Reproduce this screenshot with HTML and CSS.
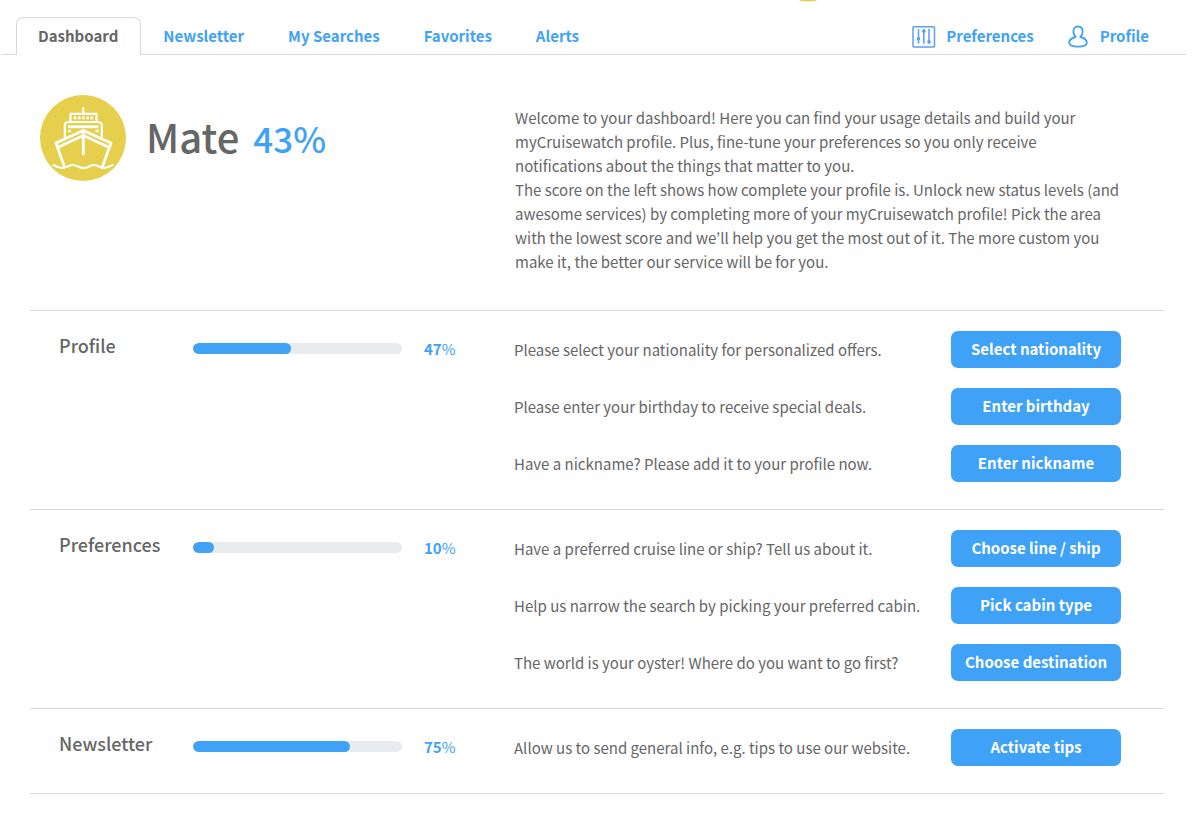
FILE: index.html
```html
<!DOCTYPE html>
<html lang="en">
<head>
<meta charset="utf-8">
<title>Dashboard</title>
<link rel="stylesheet" href="styles.css">
</head>
<body>
<div class="top-strip"><svg class="top-mark" width="24" height="2" viewBox="0 0 24 2" aria-hidden="true"><ellipse cx="13" cy="-1" rx="10" ry="2.6" fill="#e5cf4d"/></svg></div>
<nav class="tabs">
  <a class="tab tab-active" href="#dashboard">Dashboard</a>
  <a class="tab" href="#newsletter">Newsletter</a>
  <a class="tab" href="#searches">My Searches</a>
  <a class="tab" href="#favorites">Favorites</a>
  <a class="tab" href="#alerts">Alerts</a>
  <div class="tools">
    <a class="tool" href="#preferences">
      <svg width="24" height="24" viewBox="0 0 24 24" fill="none" stroke="#5b9df7" stroke-width="1.5" aria-hidden="true"><rect x="1" y="2.700" width="21.500" height="20.300" rx="1"/><path d="M6.500 5v14.700M11.800 5v14.700M17 5v14.700"/><g fill="#5b9df7" stroke="none"><circle cx="6.500" cy="14.700" r="1.800"/><circle cx="11.800" cy="7.200" r="1.800"/><circle cx="17" cy="17.700" r="1.800"/></g></svg>
      <span>Preferences</span>
    </a>
    <a class="tool" href="#profile">
      <svg width="22" height="24" viewBox="0 0 22 24" fill="none" stroke="#3fa2f7" stroke-width="1.8" stroke-linejoin="round" aria-hidden="true"><path d="M10 2.500c-3.100 0-4.600 2.300-4.600 5.200 0 2.500 1 4.300 2.300 5.300C3.700 13.900 1.200 15.900 1.200 18.800c0 2.700 4 3.900 8.800 3.900s8.800-1.200 8.800-3.900c0-2.900-2.500-4.900-6.500-5.800 1.300-1 2.300-2.800 2.300-5.300 0-2.900-1.500-5.200-4.600-5.200z"/></svg>
      <span>Profile</span>
    </a>
  </div>
</nav>
<main class="content">
  <header class="hero">
    <div class="status">
      <svg class="badge" width="86" height="86" viewBox="0 0 86 86" fill="none" stroke="#fff" stroke-width="2.2" stroke-linejoin="round" stroke-linecap="round" aria-hidden="true">
        <circle cx="43" cy="43" r="43" fill="#e5cf4d" stroke="none"/>
        <path d="M43.300 13v5M30.500 26v-7.200h26V26M24.800 42V30.500q0-3.500 3.500-3.500h30q3.500 0 3.500 3.500V42"/>
        <path d="M28 31.800h30.500" stroke-width="2.800" stroke-linecap="butt"/>
        <path d="M33.700 22.800h19.500" stroke-width="2.700" stroke-dasharray="2.700 1.500" stroke-linecap="butt"/>
        <path d="M28 34.700h3v2.500h-3zM55.500 34.700h3v2.500h-3z" fill="#fff" stroke="none"/>
        <path d="M43.300 35.500L16 48l8.300 23.500M43.300 35.500L71 48l-8.500 23.500M17.500 52.500l25.800-12 26 12M43.300 36v23" stroke-width="2.800"/>
        <path d="M13.500 70c3 2 5 3 8.500 3 5 0 7-3 11-3s6 3 10.500 3S50 70 54 70s6 3 10 3c3.500 0 5-1 8.500-3"/>
      </svg>
      <h1 class="rank">Mate</h1>
      <span class="score">43%</span>
    </div>
    <div class="intro">
      <p>Welcome to your dashboard! Here you can find your usage details and build your myCruisewatch profile. Plus, fine-tune your preferences so you only receive notifications about the things that matter to you.</p>
      <p>The score on the left shows how complete your profile is. Unlock new status levels (and awesome services) by completing more of your myCruisewatch profile! Pick the area with the lowest score and we’ll help you get the most out of it. The more custom you make it, the better our service will be for you.</p>
    </div>
  </header>
  <section class="section">
    <h2 class="name">Profile</h2>
    <div class="track"><div class="fill" style="width:47%"></div></div>
    <div class="percent"><b>47</b>%</div>
    <div class="actions">
      <div class="action"><p>Please select your nationality for personalized offers.</p><button class="button">Select nationality</button></div>
      <div class="action"><p>Please enter your birthday to receive special deals.</p><button class="button">Enter birthday</button></div>
      <div class="action"><p>Have a nickname? Please add it to your profile now.</p><button class="button">Enter nickname</button></div>
    </div>
  </section>
  <section class="section">
    <h2 class="name">Preferences</h2>
    <div class="track"><div class="fill" style="width:10%"></div></div>
    <div class="percent"><b>10</b>%</div>
    <div class="actions">
      <div class="action"><p>Have a preferred cruise line or ship? Tell us about it.</p><button class="button">Choose line / ship</button></div>
      <div class="action"><p>Help us narrow the search by picking your preferred cabin.</p><button class="button">Pick cabin type</button></div>
      <div class="action"><p>The world is your oyster! Where do you want to go first?</p><button class="button">Choose destination</button></div>
    </div>
  </section>
  <section class="section">
    <h2 class="name">Newsletter</h2>
    <div class="track"><div class="fill" style="width:75%"></div></div>
    <div class="percent"><b>75</b>%</div>
    <div class="actions">
      <div class="action"><p>Allow us to send general info, e.g. tips to use our website.</p><button class="button">Activate tips</button></div>
    </div>
  </section>
</main>
</body>
</html>
```

FILE: styles.css
```css
* { box-sizing: border-box; }
body {
  margin: 0;
  padding: 0 13px 0 1px;
  background: #fff;
  color: #666;
  font: 15px/24px "Noto Sans CJK KR", "Noto Sans", sans-serif;
}
h1, h2, p { margin: 0; font-weight: 400; }
a { color: #3fa2f7; text-decoration: none; }
.top-strip { height: 17px; padding-left: 67%; line-height: 0; }
.top-mark { display: block; }
.tabs {
  display: flex;
  height: 38px;
  padding-left: 15px;
  border-bottom: 1px solid #d8d8d8;
  font-weight: 700;
}
.tab { padding: 7px 22px 0; }
.tab-active {
  height: 38px;
  padding: 6px 22px 0 21px;
  border: 1px solid #d8d8d8;
  border-bottom: 0;
  border-radius: 7px 7px 0 0;
  background: #fff;
  color: #666;
}
.tools { display: flex; gap: 34px; margin-left: auto; padding: 7px 37px 0 0; }
.tool { display: flex; align-items: flex-start; gap: 10px; }
.content { padding: 0 22px 0 29px; }
.hero { display: flex; padding: 40px 23px 36px 10px; }
.status { display: flex; flex: 0 0 475px; }
.badge { margin-right: 20px; }
.rank { font-size: 40px; font-weight: 500; line-height: 82px; }
.score { margin-left: 14px; color: #3fa2f7; font-size: 35px; font-weight: 500; line-height: 86px; }
.intro { flex: 1; max-width: 608px; padding-top: 11px; }
.section {
  display: grid;
  grid-template-columns: 134px 209px 112px 1fr;
  align-items: start;
  padding: 20px 43px 7px 29px;
  border-top: 1px solid #d8d8d8;
}
.section:last-child { border-bottom: 1px solid #d8d8d8; }
.name { font-size: 18px; font-weight: 500; line-height: 28px; }
.track { height: 11px; margin-top: 12px; border-radius: 6px; background: #e8ecef; overflow: hidden; }
.fill { height: 11px; border-radius: 6px; background: #3fa2f7; }
.percent { padding: 6px 0 0 22px; color: #3fa2f7; }
.percent b { font-weight: 700; }
.action { display: flex; justify-content: space-between; margin-bottom: 20px; }
.action p { padding-top: 7px; white-space: nowrap; }
.button {
  flex: 0 0 170px;
  height: 37px;
  padding: 0 0 2px;
  border: 0;
  border-radius: 7px;
  background: #3fa2f7;
  color: #fff;
  font: inherit;
  font-weight: 700;
}
```
